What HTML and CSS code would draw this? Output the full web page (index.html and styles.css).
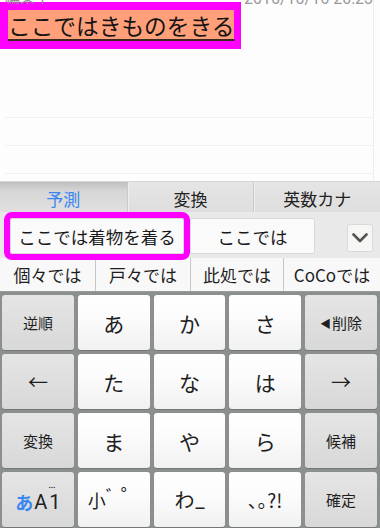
FILE: index.html
```html
<!DOCTYPE html>
<html lang="ja">
<head>
<meta charset="utf-8">
<title>IME</title>
<link rel="stylesheet" href="styles.css">
</head>
<body>
<div class="editor">
  <div class="status"><span class="st-left">編集中</span><span class="st-right">2016/10/16 20:23</span></div>
  <div class="compose"><span class="comp-text">ここではきものをきる</span></div>
  <div class="note">
    <div class="rule"></div>
    <div class="rule"></div>
    <div class="rule"></div>
  </div>
</div>
<div class="ime">
  <div class="tabs">
    <div class="tab active">予測</div>
    <div class="tab">変換</div>
    <div class="tab">英数カナ</div>
  </div>
  <div class="cands">
    <div class="cand hl">ここでは着物を着る</div>
    <div class="cand wide">ここでは</div>
    <div class="more">
      <svg width="16" height="10" viewBox="0 0 16 10"><polyline points="1.5,1.5 8,8 14.5,1.5" fill="none" stroke="#555" stroke-width="2.6" stroke-linecap="round" stroke-linejoin="round"/></svg>
    </div>
  </div>
  <div class="cands2">
    <div class="c2">個々では</div>
    <div class="c2">戸々では</div>
    <div class="c2">此処では</div>
    <div class="c2">CoCoでは</div>
  </div>
  <div class="keys">
    <div class="key fn">逆順</div>
    <div class="key">あ</div>
    <div class="key">か</div>
    <div class="key">さ</div>
    <div class="key fn"><span class="tri">◀</span>削除</div>

    <div class="key fn arrow">←</div>
    <div class="key">た</div>
    <div class="key">な</div>
    <div class="key">は</div>
    <div class="key fn arrow">→</div>

    <div class="key fn">変換</div>
    <div class="key">ま</div>
    <div class="key">や</div>
    <div class="key">ら</div>
    <div class="key fn">候補</div>

    <div class="key fn mode"><b class="hira">あ</b><span class="lat">A</span><span class="one">1<i class="dots">…</i></span></div>
    <div class="key small"><span>小</span><span class="dk">゛</span><span class="hk">゜</span></div>
    <div class="key wa"><span>わ</span><span class="us">_</span></div>
    <div class="key punct">､｡?!</div>
    <div class="key fn">確定</div>
  </div>
</div>
</body>
</html>
```
FILE: styles.css
```css
html, body {
  margin: 0;
  padding: 0;
}
body {
  width: 380px;
  height: 528px;
  overflow: hidden;
  background: #fdfdfd;
  font-family: "Noto Sans CJK JP", "Noto Sans", sans-serif;
  color: #1c1c1c;
}

/* editor */
.editor {
  height: 181px;
  width: 374px;
  border-right: 1px solid #eeebf5;
  box-sizing: border-box;
  overflow: hidden;
}
.status {
  height: 6px;
  display: flex;
  justify-content: space-between;
  align-items: flex-end;
  overflow: hidden;
  padding: 0 0 0 5px;
  color: #8c8c8c;
}
.st-left {
  font-size: 15px;
  line-height: 15px;
  margin-bottom: 3px;
}
.st-right {
  font-family: Roboto, "Noto Sans", sans-serif;
  font-size: 16px;
  line-height: 16px;
  margin-bottom: -1px;
  color: #999;
}
.compose {
  display: flex;
  width: fit-content;
  margin-top: -4px;
  border: 8px solid #ff00ff;
  border-right-width: 7px;
  background: #ffa07a;
}
.comp-text {
  font-size: 22.7px;
  line-height: 31px;
  color: #141414;
  text-decoration: underline;
  text-decoration-thickness: 2px;
  text-underline-offset: 4px;
  text-decoration-color: #3a2a22;
}
.note {
  padding: 41px 0 0 5px;
}
.rule {
  height: 28px;
  box-sizing: border-box;
  border-bottom: 1px solid #f1f1f3;
}

/* IME */
.ime {
  background: #e2e1e1;
}
.tabs {
  display: grid;
  grid-template-columns: 1fr 1fr 1fr;
  height: 31px;
  box-sizing: border-box;
  border-top: 1px solid #d6d6d6;
}
.tab {
  display: flex;
  align-items: center;
  justify-content: center;
  padding-top: 2px;
  font-size: 17px;
  color: #222;
  background: linear-gradient(#e6e5e5, #dfdede);
  border-left: 1px solid #c9c9c9;
  box-shadow: inset 1px 0 0 #eeeeee;
}
.tab:first-child {
  border-left: none;
  box-shadow: none;
}
.tab.active {
  color: #3a86f0;
  background: linear-gradient(#bfbfbf, #d6d6d6 30%, #e0e0e0);
}
.cands {
  height: 46px;
  box-sizing: border-box;
  display: flex;
  align-items: flex-end;
  gap: 6px;
  padding: 0 7px 4px 10px;
  background: #e9e9e9;
}
.cand {
  height: 36px;
  box-sizing: border-box;
  display: flex;
  align-items: center;
  justify-content: center;
  font-size: 17.5px;
  color: #1a1a1a;
  background: #fafafa;
  border: 1px solid #d9d9d9;
  border-radius: 2px;
}
.cand.hl {
  width: 174px;
  position: relative;
  z-index: 1;
  outline: 6px solid #ff00ff;
}
.cand.wide {
  width: 125px;
}
.more {
  margin-left: auto;
  margin-bottom: 2px;
  width: 26px;
  height: 28px;
  box-sizing: border-box;
  display: flex;
  align-items: center;
  justify-content: center;
  background: #f6f6f4;
  border: 1px solid #dadada;
  border-radius: 3px;
}
.cands2 {
  height: 34px;
  box-sizing: border-box;
  display: grid;
  grid-template-columns: 95px 95px 93px 1fr;
  background: #f8f8f8;
  border-bottom: 1px solid #9a9a9a;
}
.c2 {
  display: flex;
  align-items: center;
  justify-content: center;
  font-size: 17px;
  color: #1e1e1e;
  border-left: 1px solid #c6c6c6;
}
.c2:first-child {
  border-left: none;
}

/* keyboard */
.keys {
  display: grid;
  grid-template-columns: repeat(5, 1fr);
  grid-auto-rows: 55px;
  gap: 4px;
  padding: 3px 3px 0 2px;
  background: #8b908f;
  height: 236px;
  box-sizing: border-box;
}
.key {
  display: flex;
  align-items: center;
  justify-content: center;
  border-radius: 3px;
  font-size: 21px;
  color: #1e1e1e;
  background: linear-gradient(#ffffff 0%, #fbfbfb 45%, #f1f1f1 100%);
  box-shadow: 0 1px 0 rgba(0, 0, 0, 0.18);
}
.key.fn {
  font-size: 15px;
  background: linear-gradient(#e5e5e5, #d8d8d8);
}
.key.fn.arrow {
  font-size: 20px;
}
.tri {
  font-size: 11px;
  margin-right: 1px;
}
.mode {
  font-size: 19px !important;
  padding-top: 4px;
  box-sizing: border-box;
}
.hira {
  color: #3a86f0;
  font-weight: bold;
  font-size: 18px;
}
.lat, .one {
  font-family: Roboto, "Noto Sans", sans-serif;
  font-size: 20px;
  color: #222;
}
.lat {
  margin-left: 1px;
}
.one {
  position: relative;
  margin-left: 2px;
}
.dots {
  position: absolute;
  left: -1px;
  top: -12px;
  font-style: normal;
  font-size: 11px;
  letter-spacing: -1px;
}
.small {
  font-size: 18px;
  padding-left: 2px;
}
.small .dk {
  font-size: 17px;
  position: relative;
  top: -4px;
}
.small .hk {
  font-size: 21px;
  position: relative;
  top: -5px;
  margin-left: -2px;
}
.wa span:first-child {
  font-size: 20px;
}
.wa .us {
  font-family: Roboto, sans-serif;
  font-size: 20px;
  margin-left: 1px;
}
.punct {
  font-size: 19px;
  font-family: "Noto Sans CJK JP", sans-serif;
}
```
